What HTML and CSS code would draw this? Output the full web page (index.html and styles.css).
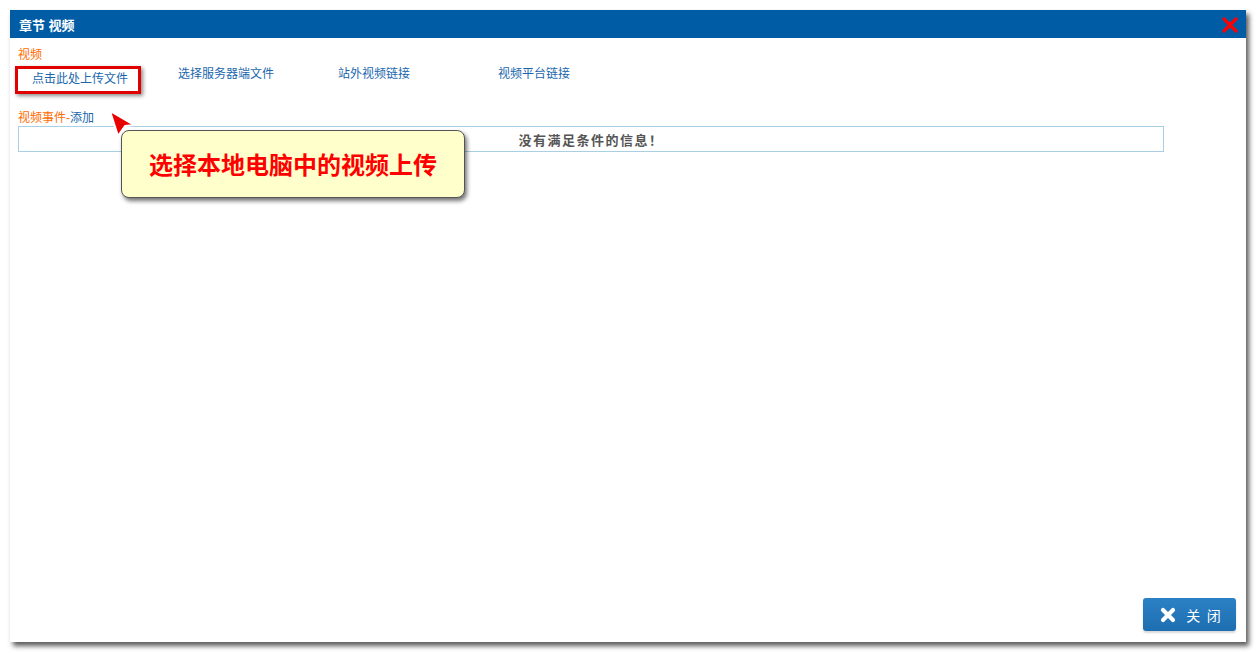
FILE: index.html
```html
<!DOCTYPE html>
<html lang="zh-CN">

<head>
    <meta charset="UTF-8">
    <title>章节 视频</title>
    <link rel="stylesheet" href="styles.css">
</head>

<body>
    <div class="dialog">
        <div class="dialog-head">
            <span class="dialog-title">章节 视频</span>
            <span class="head-close">
                <svg width="16" height="16" viewBox="0 0 16 16">
                    <path d="M2 2 L14 14 M14 2 L2 14" stroke="#ff0000" stroke-width="3.2" stroke-linecap="round" />
                </svg>
            </span>
        </div>

        <div class="dialog-body">
            <div class="label-orange">视频</div>

            <div class="tabs">
                <div class="tab"><span class="tab-mark">点击此处上传文件</span></div>
                <div class="tab">选择服务器端文件</div>
                <div class="tab">站外视频链接</div>
                <div class="tab">视频平台链接</div>
            </div>

            <div class="event-title"><span class="label-orange">视频事件-</span><a href="#" class="link">添加</a></div>

            <table class="grid">
                <tr>
                    <td>没有满足条件的信息！</td>
                </tr>
            </table>
        </div>

        <svg class="tip-arrow" width="34" height="34" viewBox="0 0 34 34">
            <path d="M4 3 L28 17 L19 18 L12 28 Z" fill="#e80000" stroke="#ffffff" stroke-width="2" stroke-linejoin="round" />
        </svg>
        <div class="tip">选择本地电脑中的视频上传</div>

        <button class="btn-close">
            <svg width="16" height="16" viewBox="0 0 16 16">
                <path d="M3 3 L13 13 M13 3 L3 13" stroke="#ffffff" stroke-width="4.2" stroke-linecap="round" />
            </svg>
            <span>关&nbsp;&nbsp;闭</span>
        </button>
    </div>
</body>

</html>
```

FILE: styles.css
```css
body {
    margin: 0;
    background: #ffffff;
    font-family: "Liberation Sans", "Noto Sans CJK SC", sans-serif;
    font-size: 12px;
}

.dialog {
    position: relative;
    width: 1236px;
    height: 632px;
    margin: 10px;
    background: #ffffff;
    box-shadow: 3px 4px 5px rgba(0, 0, 0, 0.65);
}

.dialog-head {
    height: 28px;
    background: #005ca5;
    display: flex;
    align-items: center;
    justify-content: space-between;
    padding: 0 8px 0 9px;
}

.dialog-title {
    color: #ffffff;
    font-weight: bold;
    font-size: 13px;
}

.head-close {
    display: flex;
    margin-top: 2px;
}

.dialog-body {
    padding: 9px 8px 0 8px;
}

.label-orange {
    color: #ff6a00;
    line-height: 16px;
}

.tabs {
    display: flex;
    align-items: flex-start;
    margin-top: 3px;
}

.tab {
    width: 160px;
    color: #1a66ad;
    line-height: 16px;
}

.tabs .tab:first-child {
    margin-left: -3px;
    width: 163px;
}

.tab-mark {
    display: inline-block;
    border: 3px solid #e00000;
    padding: 2px 10px 4px 14px;
    box-shadow: 2px 2px 4px rgba(0, 0, 0, 0.45);
}

.event-title {
    margin-top: 16px;
    line-height: 16px;
}

.event-title .label-orange {
    display: inline;
}

.link {
    color: #1a66ad;
    text-decoration: none;
}

.grid {
    width: 1146px;
    border-collapse: collapse;
    border: 1px solid #a9cfe4;
}

.grid td {
    height: 24px;
    text-align: center;
    font-family: "Noto Sans CJK SC", sans-serif;
    font-weight: bold;
    font-size: 13px;
    letter-spacing: 1.5px;
    color: #555555;
    padding: 0;
}

.tip-arrow {
    position: absolute;
    left: 96px;
    top: 98px;
}

.tip {
    position: absolute;
    left: 111px;
    top: 120px;
    width: 344px;
    height: 68px;
    border: 1px solid #555555;
    border-radius: 8px;
    background: #ffffcc;
    box-shadow: 2px 3px 4px rgba(0, 0, 0, 0.55);
    color: #ff0000;
    font-weight: bold;
    font-size: 24px;
    display: flex;
    align-items: center;
    justify-content: center;
    padding-bottom: 2px;
    box-sizing: border-box;
}

.btn-close {
    position: absolute;
    right: 10px;
    bottom: 11px;
    width: 93px;
    height: 33px;
    border: 0;
    border-radius: 3px;
    background: linear-gradient(#2b81c4, #1d6eb0);
    box-shadow: 0 2px 2px rgba(0, 0, 0, 0.15);
    color: #ffffff;
    font-family: "Noto Sans CJK SC", sans-serif;
    font-size: 14px;
    display: flex;
    align-items: center;
    justify-content: center;
    gap: 10px;
    padding: 0 0 0 2px;
}
```
